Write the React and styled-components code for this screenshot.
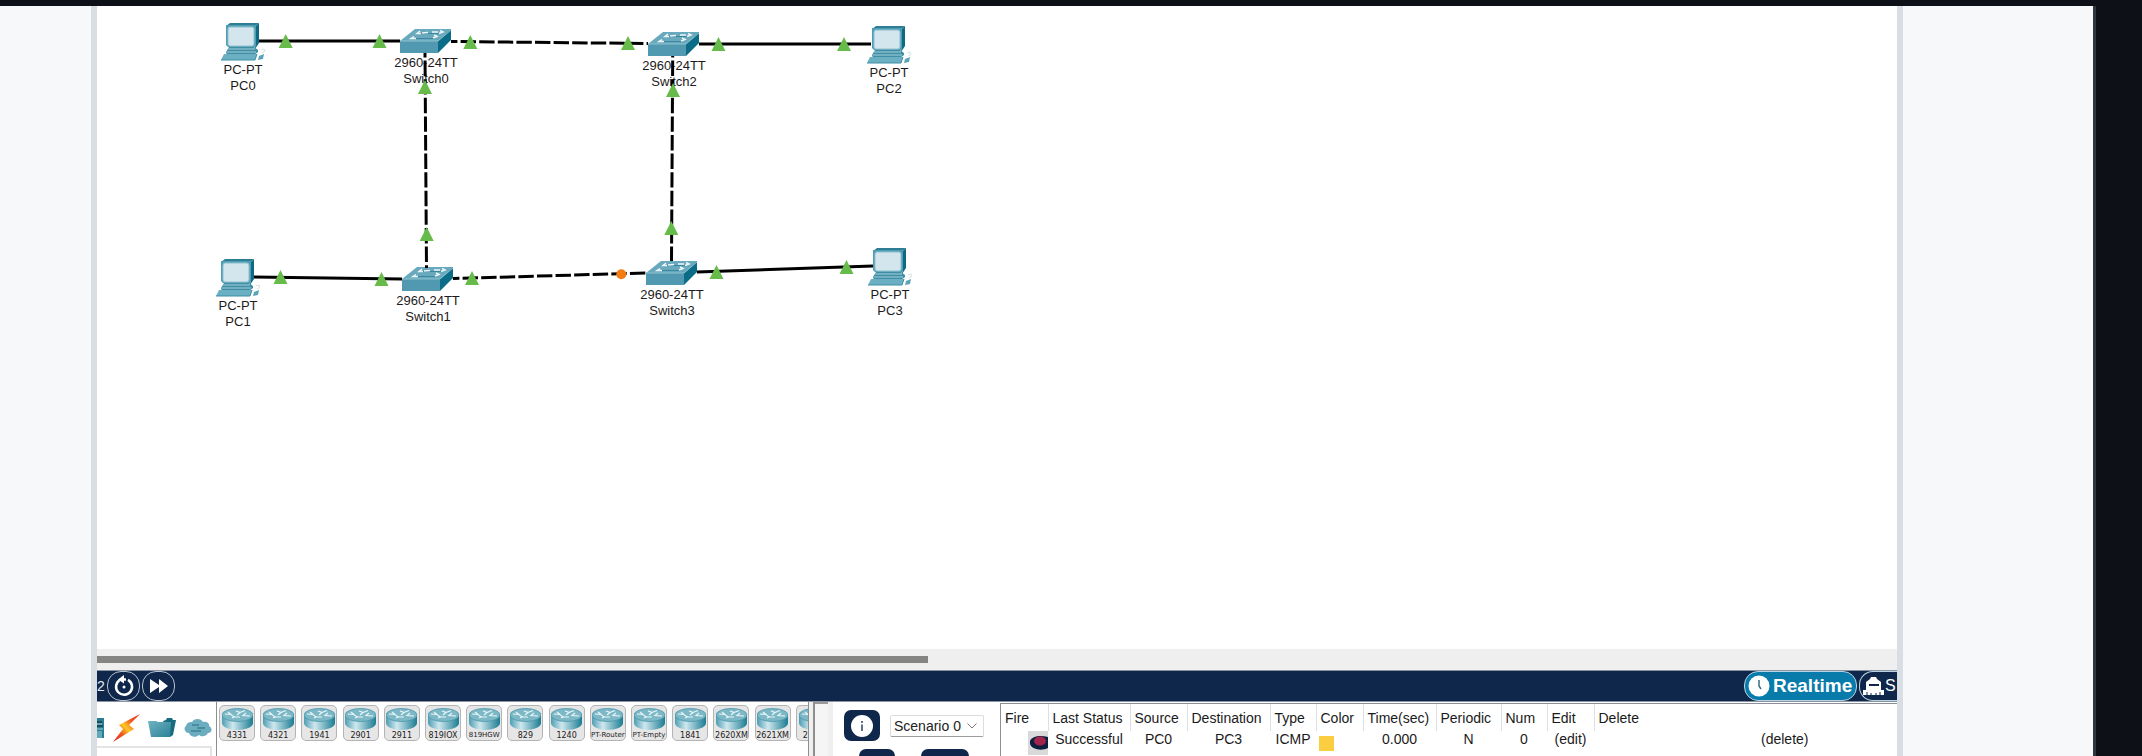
import React from 'react';
import styled, { createGlobalStyle } from 'styled-components';

const GlobalStyle = createGlobalStyle`
  *, *::before, *::after { box-sizing: border-box; }
  body { margin: 0; background: #0d1117; font-family: "Liberation Sans", Arial, sans-serif; }
  button, select { font-family: inherit; margin: 0; }
`;

const navy = '#0f274b';

const Shell = styled.div`
  height: 100vh;
  display: flex;
  padding: 6px 46px 0 0;
  background: #0d1117;
  overflow: hidden;
`;

const Article = styled.div`
  flex: 1;
  min-width: 0;
  display: flex;
  padding: 0 190px 0 91px;
  background: #f6f8fa;
  border-right: 3px solid #30363d;
`;

const Frame = styled.main`
  flex: 1;
  min-width: 0;
  display: flex;
  flex-direction: column;
  background: #fff;
  border: solid #d8dee4;
  border-width: 0 6px;
  overflow: hidden;
`;

/* ---------- workspace ---------- */

const Workspace = styled.section`
  position: relative;
  flex: 1;
  min-height: 0;
  overflow: hidden;
`;

const Node = styled.div`
  position: absolute;
  left: ${(p) => p.$x}px;
  top: ${(p) => p.$y}px;
  width: 64px;
  display: flex;
  flex-direction: column;
  align-items: center;
  gap: 1px;
  font-size: 13px;
  line-height: 16px;
  color: #1c1a20;
  text-align: center;
  white-space: nowrap;
`;

const LinkLayer = styled.svg`
  position: absolute;
  inset: 0;
  width: 100%;
  height: 100%;
`;

const PcIcon = () => (
  <svg width="45" height="38" viewBox="0 0 45 38" aria-hidden="true">
    <path d="M5 3 9 0H38L35 3Z" fill="#2f7d95" />
    <path d="M35 3 38 0V20L34 26Z" fill="#0e6a84" />
    <path d="M5 2H35V24H7L5 22Z" fill="#4f9db3" />
    <rect x="7" y="4" width="26" height="19" rx="2" fill="#d3e5ed" stroke="#8fc0cf" />
    <path d="M8 24H33L37 27V29L33 32H6L5 29Z" fill="#3f8ea6" />
    <path d="M7 26H34M6 29H35" stroke="#a4d0dc" />
    <path d="M3 31H36L34 37H0Z" fill="#6aafc2" />
    <path d="M0 37H34L36 31" fill="none" stroke="#3f8ea6" />
    <path d="M38 33 43 31 42 36 37 37Z" fill="#5ba3b8" />
    <path d="M41 30 44 28 43 26 40 27" fill="none" stroke="#d5dfe4" />
  </svg>
);

const SwitchIcon = () => (
  <svg width="52" height="25" viewBox="0 0 52 25" aria-hidden="true">
    <path d="M0 12 15 0H51L38 12Z" fill="#69a9bd" />
    <path d="M38 12 51 0V11L38 24Z" fill="#0a6c87" />
    <path d="M0 12H38V24H0Z" fill="#5099b1" />
    <path d="M0 12H38L51 1" fill="none" stroke="#8fc2d0" />
    <g stroke="#3c87a0" strokeWidth="1">
      <path d="M18 4.500H40M13 9.500H34" />
    </g>
    <g fill="none" stroke="#eef6f9" strokeWidth="1.500">
      <path d="M20 2 17 4.500H21M40 1.500 43 3 39 4.500M14 7.500 11 9.500H16M34 6 37 7.500 33 9M22 4 28 3.500M32 3 38 3" />
    </g>
  </svg>
);

const devices = [
  { kind: 'pc', model: 'PC-PT', name: 'PC0', x: 114, y: 17 },
  { kind: 'switch', model: '2960-24TT', name: 'Switch0', x: 297, y: 23 },
  { kind: 'switch', model: '2960-24TT', name: 'Switch2', x: 545, y: 26 },
  { kind: 'pc', model: 'PC-PT', name: 'PC2', x: 760, y: 20 },
  { kind: 'pc', model: 'PC-PT', name: 'PC1', x: 109, y: 253 },
  { kind: 'switch', model: '2960-24TT', name: 'Switch1', x: 299, y: 261 },
  { kind: 'switch', model: '2960-24TT', name: 'Switch3', x: 543, y: 255 },
  { kind: 'pc', model: 'PC-PT', name: 'PC3', x: 761, y: 242 },
];

const links = [
  { d: 'M162 35H303' },
  { d: 'M354 35.500 551 37.500', dash: 9 },
  { d: 'M602 38H774' },
  { d: 'M328 47 329.500 262', dash: 11 },
  { d: 'M575.700 50 574.500 255', dash: 14 },
  { d: 'M157 271 305 273' },
  { d: 'M356 272.500 549 267', dash: 9 },
  { d: 'M600 266 776 260' },
];

const upMarks = [
  [188.7, 28], [282.5, 28], [373.3, 29], [531, 30], [621.5, 31], [747, 31],
  [328, 74], [329.7, 221], [576, 77], [574.3, 215],
  [183.5, 264], [284.5, 266], [375, 265], [619.5, 259], [749.5, 254],
];

function Topology() {
  return (
    <Workspace>
      {devices.map((d) => (
        <Node key={d.name} $x={d.x} $y={d.y}>
          {d.kind === 'pc' ? <PcIcon /> : <SwitchIcon />}
          <div>
            {d.model}
            <br />
            {d.name}
          </div>
        </Node>
      ))}
      <LinkLayer aria-hidden="true">
        {links.map((l) => (
          <path
            key={l.d}
            d={l.d}
            stroke="#000"
            strokeWidth="3"
            strokeDasharray={l.dash ? '15.400 3.200' : undefined}
            strokeDashoffset={l.dash}
          />
        ))}
        {upMarks.map(([x, y]) => (
          <path key={`${x}-${y}`} d={`M${x} ${y}l7 14h-14z`} fill="#66bb4a" />
        ))}
        <circle cx="524.300" cy="268.300" r="5" fill="#f57c12" />
      </LinkLayer>
    </Workspace>
  );
}

/* ---------- scroll bar and time bar ---------- */

const ScrollTrack = styled.div`
  height: 21px;
  flex: none;
  padding: 7px 0;
  background: #efefef;
`;

const ScrollThumb = styled.div`
  width: 831px;
  height: 7px;
  background: #858583;
`;

const TimeBar = styled.div`
  height: 32px;
  flex: none;
  display: flex;
  justify-content: space-between;
  background: ${navy};
  border: solid #8b93a3;
  border-width: 1px 0;
  overflow: hidden;
`;

const BarGroup = styled.div`
  display: flex;
  align-items: center;
  gap: 2px;
  color: #e8ecf2;
`;

const Elapsed = styled.span`
  min-width: 8px;
  font-size: 14px;
`;

const RoundButton = styled.button`
  width: 33px;
  height: 30px;
  padding: 0;
  display: flex;
  align-items: center;
  justify-content: center;
  background: transparent;
  border: 1px solid #b9c3d2;
  border-radius: 14px;
`;

const ModeButton = styled.button`
  height: 30px;
  width: ${(p) => p.$width}px;
  flex: none;
  display: flex;
  align-items: center;
  gap: ${(p) => (p.$active ? 3 : 1)}px;
  padding: 0 0 0 3px;
  color: #fff;
  font-size: ${(p) => (p.$active ? 19 : 16)}px;
  font-weight: ${(p) => (p.$active ? 700 : 400)};
  background: ${(p) => (p.$active ? '#087bab' : 'transparent')};
  border: 1px solid #b9d3e2;
  border-right-width: ${(p) => (p.$active ? 1 : 0)}px;
  border-radius: ${(p) => (p.$active ? '14px' : '14px 0 0 14px')};
`;

function PlaybackBar() {
  return (
    <TimeBar>
      <BarGroup>
        <Elapsed>2</Elapsed>
        <RoundButton aria-label="Power cycle devices">
          <svg width="22" height="22" viewBox="0 0 22 22" fill="none" stroke="#fff" strokeWidth="2.500">
            <path d="M6.500 5.200A8 8 0 1 0 15 4.800" />
            <path d="M13 4.500H8" />
            <path d="M5 4.500 11 0V8.500Z" fill="#fff" stroke="none" />
            <circle cx="11" cy="12" r="1.500" fill="#fff" stroke="none" />
          </svg>
        </RoundButton>
        <RoundButton aria-label="Fast forward time">
          <svg width="18" height="14" viewBox="0 0 18 14">
            <path d="M0 0 9 6V0L18 7 9 14V8L0 14Z" fill="#fff" />
          </svg>
        </RoundButton>
      </BarGroup>
      <BarGroup>
        <ModeButton $active $width={113}>
          <svg width="22" height="22" viewBox="0 0 22 22">
            <circle cx="11" cy="11" r="10.500" fill="#fff" />
            <path d="M11 5V11L13 14" fill="none" stroke="#3a6c86" strokeWidth="1.500" />
          </svg>
          Realtime
        </ModeButton>
        <ModeButton $width={38}>
          <svg width="21" height="20" viewBox="0 0 21 20" fill="#fff">
            <path d="M7 3 8 1H13L14 3 18 6V14H21V19H0V14H3V6Z" />
            <rect x="6" y="8" width="10" height="2" fill={navy} />
            <path d="M4 19V16M8 19V17M13 19V17M17 19V16" stroke={navy} />
          </svg>
          S
        </ModeButton>
      </BarGroup>
    </TimeBar>
  );
}

/* ---------- bottom tray ---------- */

const Tray = styled.div`
  height: 54px;
  flex: none;
  display: flex;
  overflow: hidden;
`;

const Categories = styled.div`
  width: 120px;
  flex: none;
  display: flex;
  flex-direction: column;
  gap: 4px;
  padding-right: 4px;
  border-right: 1px solid #8e8e8e;
`;

const CategoryRow = styled.div`
  height: 42px;
  display: flex;
  align-items: center;
  gap: 8px;
  padding-top: 12px;
`;

const CategoryPanel = styled.div`
  height: 20px;
  border: solid #e4e4e4;
  border-width: 2px 2px 0 0;
`;

const ModelStrip = styled.div`
  width: 592px;
  flex: none;
  padding: 3px 0 0 2px;
  border-right: 1px solid #8e8e8e;
  overflow: hidden;
`;

const ModelRow = styled.div`
  display: flex;
  justify-content: space-between;
`;

const ModelTile = styled.button`
  width: ${(p) => (p.$cut ? 12 : 36)}px;
  height: 36px;
  flex: none;
  display: flex;
  flex-direction: column;
  align-items: ${(p) => (p.$cut ? 'flex-start' : 'center')};
  gap: 1px;
  padding: 2px 0 0 ${(p) => (p.$cut ? 2 : 0)}px;
  background: #e6e6e6;
  border: 1px solid #b5b3b3;
  border-right-width: ${(p) => (p.$cut ? 0 : 1)}px;
  border-radius: ${(p) => (p.$cut ? '5px 0 0 5px' : '5px')};
  color: #222;
  font-family: "DejaVu Sans", sans-serif;
  font-size: ${(p) => (p.$compact ? 7 : 8)}px;
  line-height: 9px;
  white-space: nowrap;
  overflow: hidden;
`;

const TileLabel = styled.span`
  align-self: ${(p) => (p.$cut ? 'flex-end' : 'center')};
`;

const Splitter = styled.div`
  width: 24px;
  flex: none;
  border: solid #efefef;
  border-width: 0 5px 0 4px;
  background: #f5f5f5;
  box-shadow: inset 2px 0 0 #8e8e8e, inset 0 2px 0 #9a9a9a;
`;

const ScenarioPanel = styled.div`
  width: 167px;
  flex: none;
  padding: 8px 0 0 11px;
  display: flex;
  flex-direction: column;
  gap: 8px;
`;

const ScenarioRow = styled.div`
  display: flex;
  align-items: center;
  gap: 10px;
`;

const ScenarioActions = styled.div`
  display: flex;
  gap: 26px;
  padding-left: 15px;
`;

const NavyButton = styled.button`
  width: ${(p) => p.$width}px;
  height: 31px;
  flex: none;
  padding: 0;
  display: flex;
  align-items: center;
  justify-content: center;
  background: ${navy};
  border: 0;
  border-radius: 7px;
`;

const SelectBox = styled.div`
  display: grid;
  align-items: center;
  width: 94px;
  height: 22px;
  border: 1px solid #dcdcdc;
  border-bottom-color: #9c9c9c;
  border-radius: 2px;

  > * { grid-area: 1 / 1; }
  > svg { justify-self: end; margin-right: 6px; pointer-events: none; }
`;

const Select = styled.select`
  appearance: none;
  width: 100%;
  height: 20px;
  padding: 0 0 0 3px;
  border: 0;
  background: transparent;
  color: #222;
  font-size: 14px;
`;

const PduPane = styled.div`
  flex: 1;
  min-width: 0;
  border: solid #8b8f99;
  border-width: 1px 0 0 1px;
  margin-top: 1px;
  overflow: hidden;
`;

const PduTable = styled.table`
  width: calc(100% + 79px);
  table-layout: fixed;
  border-collapse: collapse;
  font-size: 14px;
  line-height: 16px;
  color: #1a1a1a;
  white-space: nowrap;
`;

const Head = styled.th`
  width: ${(p) => (p.$width ? `${p.$width}px` : 'auto')};
  height: 27px;
  padding: 1px 0 0 4px;
  font-weight: 400;
  text-align: left;
  border-right: 1px solid #dcdfe6;
`;

const Cell = styled.td`
  height: 24px;
  padding: 0;
  text-align: ${(p) => p.$align || 'center'};
  vertical-align: top;
`;

const FireButton = styled.button`
  display: flex;
  align-items: flex-end;
  justify-content: flex-end;
  width: 20px;
  height: 24px;
  margin-left: auto;
  padding: 0 0 5px;
  background: #d9d9dc;
  border: 0;
`;

const Swatch = styled.div`
  width: 15px;
  height: 15px;
  margin: 5px 0 0 3px;
  background: #fbcd40;
`;

const models = [
  ['4331'], ['4321'], ['1941'], ['2901'], ['2911'], ['819IOX'], ['819HGW', true],
  ['829'], ['1240'], ['PT-Router', true], ['PT-Empty', true], ['1841'],
  ['2620XM'], ['2621XM'], ['2', false, true],
];

const RouterIcon = () => (
  <svg width="31" height="22" viewBox="0 0 31 22" aria-hidden="true">
    <path d="M0 7V15C0 19 7 22 15.500 22S31 19 31 15V7Z" fill="url(#router-side)" />
    <ellipse cx="15.500" cy="7" rx="15.500" ry="6.500" fill="#7db8c7" stroke="#4795aa" strokeWidth=".8" />
    <path
      d="M3 6 9 6.500 12 9H18M6 4 9 6.500M14 3 18 4.500 15 7M18 4.500 23 2.500M28 8 21 7.500 24 5M10 10 13 8.500"
      fill="none"
      stroke="#e9f5f8"
      strokeWidth="1.200"
    />
  </svg>
);

const columns = [
  ['Fire', 47], ['Last Status', 82], ['Source', 57], ['Destination', 83], ['Type', 46],
  ['Color', 47], ['Time(sec)', 73], ['Periodic', 65], ['Num', 46], ['Edit', 47], ['Delete'],
];

function DevicePicker() {
  return (
    <>
      <Categories>
        <CategoryRow>
          <svg width="7" height="20" viewBox="0 0 7 20" aria-label="Network devices">
            <path d="M0 0H7V20H0Z" fill="#2b7e92" />
            <path d="M0 4H5M0 8H6" stroke="#173f4a" strokeWidth="1.500" />
            <path d="M0 6H5M0 11H6" stroke="#9fd0da" />
            <path d="M0 13H5V20H0Z" fill="#5fa9ba" />
          </svg>
          <svg width="28" height="28" viewBox="0 0 28 28" aria-label="Connections">
            <path d="M28 0 7 11 11 15 1 28 22 15 17 11Z" fill="url(#bolt)" />
          </svg>
          <svg width="28" height="20" viewBox="0 0 28 20" aria-label="End devices">
            <path d="M15 3 18 2 19 0H24L25 2H28L25 17 22 19Z" fill="#176c80" />
            <path d="M0 3H8L10 4H23L22 19H3Z" fill="url(#folder)" />
          </svg>
          <svg width="28" height="20" viewBox="0 0 28 20" aria-label="Components">
            <path
              d="M5 15C1 15-1 10 2 8 3 4 6 4 8 4 10 0 17 0 19 4 23 3 26 6 25 8 29 10 28 15 24 15 22 19 17 19 15 17 12 20 6 19 5 15Z"
              fill="#6bacbe"
            />
            <path d="M8 7H15M13 10H21M7 13H17" stroke="#3c8397" strokeWidth="1.500" />
          </svg>
        </CategoryRow>
        <CategoryPanel />
      </Categories>
      <ModelStrip>
        <ModelRow>
          {models.map(([label, compact, cut]) => (
            <ModelTile key={label} $compact={compact} $cut={cut}>
              <RouterIcon />
              <TileLabel $cut={cut}>{label}</TileLabel>
            </ModelTile>
          ))}
        </ModelRow>
      </ModelStrip>
    </>
  );
}

function Scenario() {
  return (
    <ScenarioPanel>
      <ScenarioRow>
        <NavyButton $width={36} aria-label="Scenario information">
          <svg width="22" height="22" viewBox="0 0 22 22">
            <circle cx="11" cy="11" r="11" fill="#fff" />
            <path d="M11 6V8M11 9.500V16" stroke="#5f6f88" strokeWidth="2" />
          </svg>
        </NavyButton>
        <SelectBox>
          <Select aria-label="Scenario" defaultValue="0">
            <option value="0">Scenario 0</option>
          </Select>
          <svg width="10" height="6" viewBox="0 0 10 6" fill="none" stroke="#777">
            <path d="M.500 .500 5 5 9.500 .500" />
          </svg>
        </SelectBox>
      </ScenarioRow>
      <ScenarioActions>
        <NavyButton $width={36} aria-label="New" />
        <NavyButton $width={48} aria-label="Delete scenario" />
      </ScenarioActions>
    </ScenarioPanel>
  );
}

function PduList() {
  return (
    <PduPane>
      <PduTable>
        <thead>
          <tr>
            {columns.map(([label, width]) => (
              <Head key={label} $width={width}>{label}</Head>
            ))}
          </tr>
        </thead>
        <tbody>
          <tr>
            <Cell>
              <FireButton aria-label="Fire">
                <svg width="18" height="14" viewBox="0 0 18 14">
                  <path d="M0 5C2 0 10-1 18 1V12C12 15 2 14 0 8Z" fill="#10213f" />
                  <ellipse cx="10" cy="5" rx="6" ry="4.500" fill="#a3244d" />
                </svg>
              </FireButton>
            </Cell>
            <Cell>Successful</Cell>
            <Cell>PC0</Cell>
            <Cell>PC3</Cell>
            <Cell>ICMP</Cell>
            <Cell $align="left"><Swatch /></Cell>
            <Cell>0.000</Cell>
            <Cell>N</Cell>
            <Cell>0</Cell>
            <Cell>(edit)</Cell>
            <Cell>(delete)</Cell>
          </tr>
        </tbody>
      </PduTable>
    </PduPane>
  );
}

const Defs = styled.svg`
  position: absolute;
`;

export default function App() {
  return (
    <Shell>
      <GlobalStyle />
      <Defs width="0" height="0" aria-hidden="true">
        <linearGradient id="router-side">
          <stop offset="0" stopColor="#4e9db3" />
          <stop offset=".35" stopColor="#cfe8ee" />
          <stop offset="1" stopColor="#1b7c93" />
        </linearGradient>
        <linearGradient id="folder" x2="1" y2="1">
          <stop offset="0" stopColor="#6fb3c3" />
          <stop offset="1" stopColor="#2c8197" />
        </linearGradient>
        <linearGradient id="bolt" x1="0" y1="1" x2="1" y2="0">
          <stop offset="0" stopColor="#d61f1f" />
          <stop offset=".3" stopColor="#f0561d" />
          <stop offset=".5" stopColor="#ffc928" />
          <stop offset=".72" stopColor="#f0561d" />
          <stop offset="1" stopColor="#e22a1c" />
        </linearGradient>
      </Defs>
      <Article>
        <Frame>
          <Topology />
          <ScrollTrack>
            <ScrollThumb />
          </ScrollTrack>
          <PlaybackBar />
          <Tray>
            <DevicePicker />
            <Splitter />
            <Scenario />
            <PduList />
          </Tray>
        </Frame>
      </Article>
    </Shell>
  );
}
